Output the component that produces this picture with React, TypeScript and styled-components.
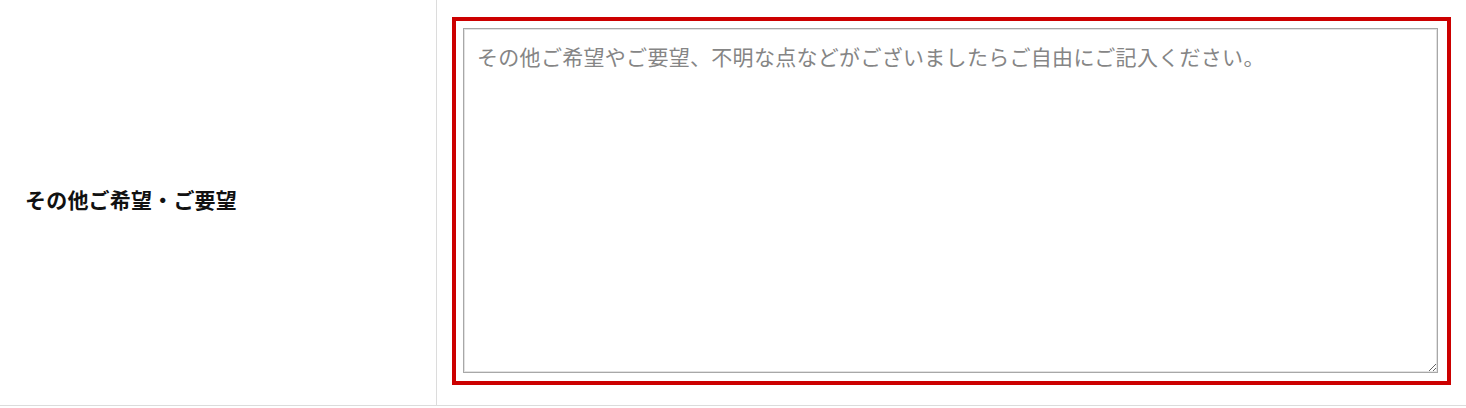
import React from 'react'
import styled, { createGlobalStyle } from 'styled-components'

const GlobalStyle = createGlobalStyle`
  html, body {
    margin: 0;
    padding: 0;
    background: #fff;
  }
  body {
    font-family: "Noto Sans CJK JP", "Noto Sans", sans-serif;
  }
`

const FormRow = styled.div`
  border-bottom: 1px solid #dcdcdc;
  display: grid;
  grid-template-columns: 437px 1fr;
  width: 1466px;
`

const Label = styled.div`
  align-items: center;
  border-right: 1px solid #dcdcdc;
  color: #111;
  display: flex;
  font-size: 21px;
  font-weight: 700;
  letter-spacing: 0.2px;
  line-height: 1;
  padding: 0 0 6px 25px;
`

const Field = styled.div`
  padding: 17px 15px 20px 15px;
`

// 赤枠で囲んで強調する
const Highlight = styled.div`
  border: 4px solid #cc0000;
  padding: 7px 9px 8px 7px;
`

const TextArea = styled.textarea`
  background: #fff;
  border: 1px solid #a8a8a8;
  box-shadow: inset 0 0 0 1px #e2e2e2;
  box-sizing: border-box;
  color: #333;
  display: block;
  font-family: "Noto Sans CJK JP", "Noto Sans", sans-serif;
  font-size: 21px;
  height: 345px;
  letter-spacing: 0.3px;
  line-height: 1.5;
  margin: 0;
  outline: none;
  padding: 12px 13px;
  width: 100%;

  &::placeholder {
    color: #858585;
  }
`

export default function App() {
  const [text, setText] = React.useState('')

  return (
    <>
      <GlobalStyle />
      <FormRow>
        <Label>その他ご希望・ご要望</Label>
        <Field>
          <Highlight>
            <TextArea
              placeholder="その他ご希望やご要望、不明な点などがございましたらご自由にご記入ください。"
              value={text}
              onChange={(event) => setText(event.target.value)}
            />
          </Highlight>
        </Field>
      </FormRow>
    </>
  )
}
